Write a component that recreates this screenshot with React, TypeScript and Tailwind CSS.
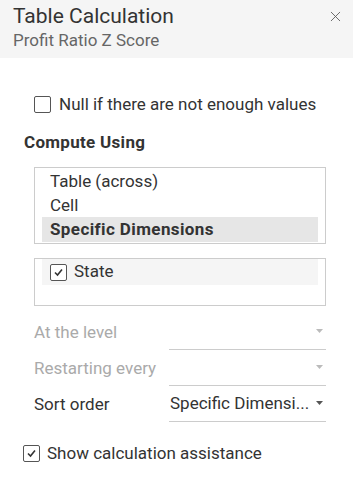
import { X } from "lucide-react";

function Box({ checked, className = "" }: { checked?: boolean; className?: string }) {
  return (
    <span
      className={`flex h-[17px] w-[17px] shrink-0 items-center justify-center rounded-[2px] border border-[#555] bg-white ${className}`}
    >
      {checked && (
        <svg width="11" height="11" viewBox="0 0 11 11">
          <path d="M2 5.5 L4.5 8 L9 2.5" fill="none" stroke="#333" strokeWidth="1.6" />
        </svg>
      )}
    </span>
  );
}

function Dropdown({ label, value, disabled }: { label: string; value?: string; disabled?: boolean }) {
  return (
    <div className="flex h-[36px] items-center">
      <div className={`w-[135px] whitespace-nowrap pt-[2px] ${disabled ? "text-[#aaa]" : "text-[#333]"}`}>{label}</div>
      <div className="flex h-full min-w-0 flex-1 items-center border-b border-[#ccc] pl-[1px]">
        <span className="flex-1 whitespace-nowrap text-[#333]">{value}</span>
        <svg width="8" height="5" viewBox="0 0 8 5" className="mr-[2px] shrink-0">
          <path d="M0 0 H7 L3.5 4 Z" fill={disabled ? "#bbb" : "#555"} />
        </svg>
      </div>
    </div>
  );
}

export default function App() {
  return (
    <div className="h-[494px] w-[353px] bg-white text-[17px] text-[#333]" style={{ fontFamily: "Roboto, sans-serif" }}>
      <div className="flex h-[58px] items-start justify-between bg-[#f5f5f5] pl-[13px] pr-[9px] pt-[2px]">
        <div>
          <div className="text-[21px] leading-[28px] text-[#333]">Table Calculation</div>
          <div className="text-[17px] leading-[20px] text-[#666]">Profit Ratio Z Score</div>
        </div>
        <X size={17} strokeWidth={1.2} className="mt-[6px] text-[#555]" />
      </div>

      <div className="pl-[34px] pr-[27px] pt-[37px]">
        <label className="flex items-center gap-[8px]">
          <Box />
          <span className="leading-[18px]">Null if there are not enough values</span>
        </label>
      </div>

      <div className="pl-[24px] pt-[19px] font-bold leading-[20px] tracking-[0.3px]">Compute Using</div>

      <div className="ml-[34px] mr-[27px] mt-[15px] border border-[#ccc] px-[7px] leading-[24px]">
        <div className="px-[8px] pt-[1px]">Table (across)</div>
        <div className="px-[8px]">Cell</div>
        <div className="mb-[1px] bg-[#e6e6e6] px-[8px] pb-[1px] font-bold tracking-[0.4px]">Specific Dimensions</div>
      </div>

      <div className="ml-[34px] mr-[27px] mt-[14px] h-[48px] border border-[#ccc] px-[7px]">
        <div className="flex h-[26px] items-center gap-[7px] bg-[#f5f5f5] px-[8px]">
          <Box checked />
          <span>State</span>
        </div>
      </div>

      <div className="ml-[34px] mr-[27px] mt-[8px] flex flex-col">
        <Dropdown label="At the level" disabled />
        <Dropdown label="Restarting every" disabled />
        <Dropdown label="Sort order" value="Specific Dimensi..." />
      </div>

      <div className="pl-[23px] pt-[19px]">
        <label className="flex items-center gap-[7px]">
          <Box checked />
          <span>Show calculation assistance</span>
        </label>
      </div>
    </div>
  );
}
